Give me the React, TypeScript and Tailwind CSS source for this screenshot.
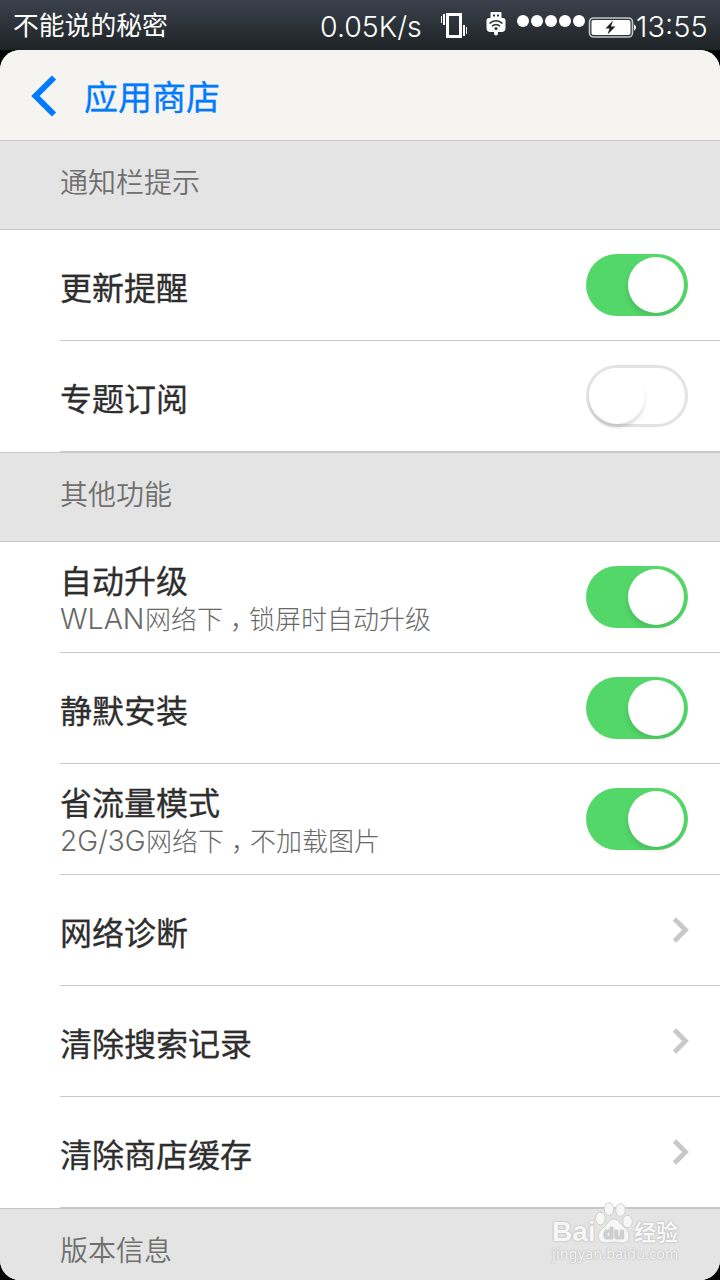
import React from 'react';
import { clsx } from 'clsx';

type Row = {
  title: string;
  note?: React.ReactNode;
  on?: boolean;
};

// half-width alternate, padded back out so the comma sits in the middle of its cell
const Comma = () => (
  <span className="inline-block w-[26px] pl-[7px] [font-feature-settings:'halt']">，</span>
);

const NOTIFY_ROWS: Row[] = [
  { title: '更新提醒', on: true },
  { title: '专题订阅', on: false },
];

const OTHER_ROWS: Row[] = [
  {
    title: '自动升级',
    note: <><span className="inline-block w-[85px] text-[28.500px] font-light">WLAN</span>网络下<Comma />锁屏时自动升级</>,
    on: true,
  },
  { title: '静默安装', on: true },
  {
    title: '省流量模式',
    note: <><span className="inline-block w-[86px] text-[28px] font-light">2G/3G</span>网络下<Comma />不加载图片</>,
    on: true,
  },
  { title: '网络诊断' },
  { title: '清除搜索记录' },
  { title: '清除商店缓存' },
];

const VibrateIcon = () => (
  <svg width="28" height="28" viewBox="0 0 28 28" fill="#fff">
    <path d="M6 1h16v25H6zM9 4v19h10V4z" fillRule="evenodd" />
    <path d="M1 4h1v7H1zM3 2h2v11H3zM23 13h2v11h-2zM26 15h1v7h-1z" />
  </svg>
);

const UsbIcon = () => (
  <svg width="20" height="26" viewBox="0 0 20 26">
    <path d="M5.500 1h9a1 1 0 0 1 1 1v5H17a2.500 2.500 0 0 1 2.500 2.500V17c0 2.500-1.500 4-4 4H12v1.500a2 2 0 0 1-4 0V21H4.500c-2.500 0-4-1.500-4-4V9.500A2.500 2.500 0 0 1 3 7h1.500V2a1 1 0 0 1 1-1z" fill="#fff" />
    <path d="M7 3.500h2v2H7zM11 3.500h2v2h-2z" fill="#2b3137" />
    <g fill="none" stroke="#2b3137" strokeWidth="1.500">
      <path d="M3.500 12.500c3.700-3.800 9.300-3.800 13 0" />
      <path d="M6 15.200c2.400-2.400 5.600-2.400 8 0" />
    </g>
    <circle cx="10" cy="17.500" r="1.500" fill="#2b3137" />
  </svg>
);

const BatteryIcon = () => (
  <svg width="48" height="22" viewBox="0 0 48 22">
    <rect x="1.500" y="1" width="43" height="19" rx="4" fill="#30363c" stroke="#c3c7ca" strokeWidth="1.600" />
    <rect x="3.500" y="3" width="39" height="15" rx="2" fill="#fff" />
    <path d="M46 7.500c2.600 1 2.600 5 0 6z" fill="#fff" />
    <path d="M25 3.500 17.500 11.500h4L19.500 17.500 27.500 9.500h-4.500z" fill="#1b1f22" />
  </svg>
);

const StatusBar = () => (
  <div className="flex h-[50px] bg-linear-to-b from-[#3b424c] to-[#1e2326] pl-[13px] font-['Noto_Sans_CJK_SC',sans-serif] text-white">
    <span className="w-[307px] text-[25.800px] leading-[48px]">不能说的秘密</span>
    <span className="w-[120px] font-['Inter','Liberation_Sans',sans-serif] text-[28.500px] leading-[53px] font-light whitespace-nowrap">0.05K/s</span>
    <span className="w-[46px] pt-[12px]"><VibrateIcon /></span>
    <span className="w-[31px] pt-[11px]"><UsbIcon /></span>
    <div className="flex w-[71px] gap-[2px] pt-[15px]">
      {[0, 1, 2, 3, 4].map(i => (
        <span key={i} className="h-[12px] w-[12px] rounded-full bg-white" />
      ))}
    </div>
    <span className="w-[48px] pt-[17px]"><BatteryIcon /></span>
    <span className="font-['Inter','Liberation_Sans',sans-serif] text-[29px] leading-[54px] font-light whitespace-nowrap">13:55</span>
  </div>
);

const Header = () => (
  <header className="flex h-[90px] shrink-0 items-center bg-[#f6f4f1] pl-[31px] text-[#007aff]">
    <svg width="26" height="42" viewBox="0 0 26 42" className="mt-[1px]">
      <path d="M23 2.500 4.500 21l18.500 18.500" fill="none" stroke="currentColor" strokeWidth="6" />
    </svg>
    <h1 className="mt-[1px] ml-[27px] text-[34px] leading-[50px] [-webkit-text-stroke:0.3px_currentColor]">应用商店</h1>
  </header>
);

const SectionTitle = ({ children }: { children: React.ReactNode }) => (
  <div className="h-[90px] shrink-0 border-y border-[#c8c8c8] bg-[#e4e4e4] pl-[60px] text-[28px] leading-[81px] font-[350] text-[#707070]">
    {children}
  </div>
);

const Toggle = ({ on }: { on: boolean }) => (
  <span
    className={clsx(
      'flex h-[62px] w-[102px] shrink-0 items-center rounded-full',
      on ? 'justify-end bg-[#53d769] pr-[4px]' : 'border-[3px] border-[#e3e3e3] bg-white',
    )}
  >
    <span
      className={clsx(
        'h-[56px] w-[56px] rounded-full bg-white',
        on ? 'shadow-[-1px_4px_5px_rgba(0,0,0,0.1)]' : 'shadow-[0px_4px_3px_rgba(0,0,0,0.12)]',
      )}
    />
  </span>
);

const Chevron = () => (
  <svg width="18" height="26" viewBox="0 0 18 26" className="mr-[-2px]">
    <path d="M2.500 2 13.500 13l-11 11" fill="none" stroke="#c8c8c8" strokeWidth="4.800" />
  </svg>
);

const SettingRow = ({ title, note, on }: Row) => (
  <div className="ml-[60px] flex h-[111px] shrink-0 items-center justify-between border-b border-[#c8c8c8] pr-[32px]">
    <div className="flex flex-col">
      <span className={clsx('text-[32px] text-[#2e2e2e] [-webkit-text-stroke:0.3px_currentColor]', note ? 'mt-[6px] leading-[38px]' : 'mt-[1px] leading-[48px]')}>{title}</span>
      {note && <span className="mt-px font-['Inter','Noto_Sans_CJK_SC',sans-serif] text-[26px] leading-[40px] font-light whitespace-nowrap text-[#686868]">{note}</span>}
    </div>
    {on === undefined ? <Chevron /> : <Toggle on={on} />}
  </div>
);

const Paw = () => (
  <svg width="38" height="42" viewBox="0 0 38 42" className="shrink-0" fill="#f7f7f7" stroke="#d0d0d0" strokeWidth="1">
    <ellipse cx="14" cy="7" rx="4.800" ry="6.300" />
    <ellipse cx="25.500" cy="8" rx="4.800" ry="6.300" />
    <ellipse cx="5.500" cy="16.500" rx="4.800" ry="6.300" />
    <ellipse cx="32.500" cy="19.500" rx="4.800" ry="6.300" />
    <path d="M19 17c5 0 6 5 10 8 8 6 6 16-2 16-4 0-5-1-8-1s-4 1-8 1c-9 0-10-10-3-15 4-3 6-9 11-9z" />
    <text x="19" y="37" textAnchor="middle" fontSize="17" fontWeight="700" fontFamily="Liberation Sans" fill="#d0d0d0" stroke="none">du</text>
  </svg>
);

const Watermark = () => (
  <div className="absolute top-[1202px] left-[552px] w-[130px] text-[#f7f7f7] [text-shadow:0_0_2px_#b0b0b0,0_0_1px_#b8b8b8]">
    <div className="flex h-[42px] items-end">
      <span className="w-[43px] shrink-0 font-['Liberation_Sans',sans-serif] text-[28px] leading-[25px] font-bold">Bai</span>
      <Paw />
      <span className="ml-[1px] text-[22px] leading-[28px] font-bold whitespace-nowrap">经验</span>
    </div>
    <div className="font-['Noto_Sans',sans-serif] text-[14px] leading-[20px] tracking-[0.3px]">jingyan.baidu.com</div>
  </div>
);

export default function App() {
  return (
    <div className="relative h-[1280px] w-[720px] overflow-hidden bg-black font-['Noto_Sans_CJK_SC',sans-serif]">
      <StatusBar />
      <main className="flex h-[1230px] flex-col overflow-hidden rounded-[20px] bg-white">
        <Header />
        <SectionTitle>通知栏提示</SectionTitle>
        {NOTIFY_ROWS.map(row => <SettingRow key={row.title} {...row} />)}
        <SectionTitle>其他功能</SectionTitle>
        {OTHER_ROWS.map(row => <SettingRow key={row.title} {...row} />)}
        <SectionTitle>版本信息</SectionTitle>
      </main>
      <Watermark />
    </div>
  );
}
